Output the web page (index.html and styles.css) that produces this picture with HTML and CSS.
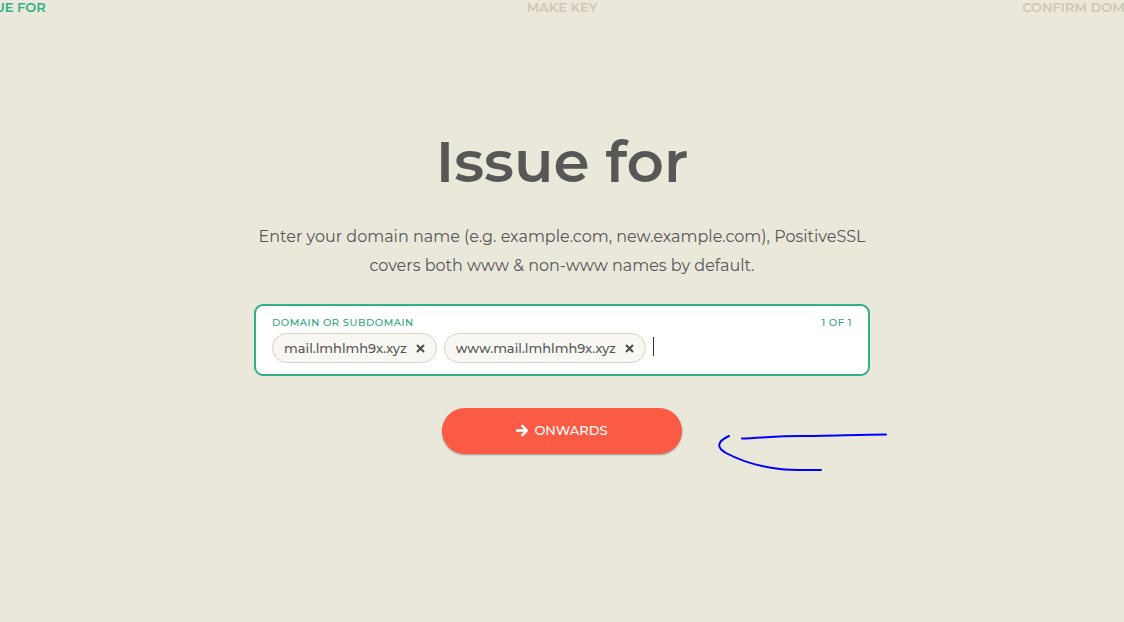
FILE: index.html
```html
<!DOCTYPE html>
<html lang="en">
<head>
<meta charset="utf-8">
<meta name="viewport" content="width=device-width, initial-scale=1">
<title>Issue for</title>
<link rel="stylesheet" href="styles.css">
</head>
<body>
<ol class="steps">
  <li class="step step-current" aria-current="step">Issue for</li>
  <li class="step">Make key</li>
  <li class="step">Confirm domain</li>
</ol>
<main class="panel">
  <h1 class="title">Issue for</h1>
  <p class="intro">Enter your domain name (e.g. example.com, new.example.com), PositiveSSL covers both www &amp; non-www names by default.</p>
  <form class="form">
    <div class="field">
      <div class="field-head">
        <label for="domain">Domain or subdomain</label>
        <span>1 of 1</span>
      </div>
      <div class="tags">
        <span class="tag">mail.lmhlmh9x.xyz
          <button class="remove" type="button" aria-label="Remove mail.lmhlmh9x.xyz"><svg width="9" height="9" viewBox="0 0 9 9"><path d="M1 1l7 7M8 1L1 8"/></svg></button>
        </span>
        <span class="tag">www.mail.lmhlmh9x.xyz
          <button class="remove" type="button" aria-label="Remove www.mail.lmhlmh9x.xyz"><svg width="9" height="9" viewBox="0 0 9 9"><path d="M1 1l7 7M8 1L1 8"/></svg></button>
        </span>
        <input class="entry" id="domain" type="text" autocomplete="off">
      </div>
    </div>
    <div class="actions">
      <button class="submit" type="button">
        <svg class="arrow" width="12" height="13" viewBox="0 0 12 13"><path d="M0 6.5H10.500M5.500 1.100L10.900 6.500L5.500 11.900"/></svg>
        Onwards
      </button>
      <svg class="scribble" width="172" height="42" viewBox="0 0 172 42" aria-hidden="true"><path d="M12 4C-1 10 0 16 9 21C24 29 45 35 63 37C74 38.500 89 38 104 38M25 6.500C47 5.500 65 4 83 4C110 4 144 2.500 169 2.500"/></svg>
    </div>
  </form>
</main>
</body>
</html>
```
FILE: styles.css
```css
* {
  box-sizing: border-box;
}

body {
  margin: 0;
  min-height: 100vh;
  overflow: hidden;
  background: #eae7db;
  color: #575756;
  font-family: Montserrat, Inter, "Open Sans", sans-serif;
  font-size: 13px;
}

.steps {
  display: grid;
  grid-template-columns: 1fr auto 1fr;
  margin: 0 -26px;
  padding: 0;
  list-style: none;
  color: #d0c8b0;
  font-weight: 600;
  line-height: 15px;
  text-transform: uppercase;
  white-space: nowrap;
}

.step:last-child {
  padding-right: 1px;
  text-align: right;
}

.step-current {
  color: #2fb086;
}

.panel {
  width: 100%;
  max-width: 616px;
  margin: 0 auto;
  padding-top: 112px;
}

.title {
  margin: 0;
  font-size: 58px;
  font-weight: 600;
  line-height: 70px;
  text-align: center;
}

.intro {
  margin: 25px 0 24px;
  font-size: 16px;
  font-weight: 400;
  line-height: 29px;
  text-align: center;
}

.field {
  padding: 10px 16px 11px;
  border: 2px solid #2fb086;
  border-radius: 9px;
  background: #fff;
}

.field-head {
  display: flex;
  justify-content: space-between;
  margin-bottom: 4px;
  color: #2fa37c;
  font-size: 10px;
  font-weight: 500;
  letter-spacing: 0.05em;
  line-height: 13px;
  text-transform: uppercase;
}

.tags {
  display: flex;
  flex-wrap: wrap;
  align-items: center;
  gap: 7px;
}

.tag {
  display: flex;
  align-items: center;
  gap: 9px;
  height: 30px;
  padding: 0 11px;
  border: 1px solid #d8d3c0;
  border-radius: 15px;
  background: #f9f7f4;
  font-weight: 500;
  white-space: nowrap;
}

.remove {
  display: flex;
  padding: 0;
  border: 0;
  background: none;
  cursor: pointer;
}

.remove path {
  fill: none;
  stroke: #4b4b4a;
  stroke-width: 2;
}

.entry {
  flex: 1;
  min-width: 20px;
  height: 19px;
  margin-bottom: 3px;
  padding: 0;
  border: 0;
  border-left: 1px solid #333;
  outline: 0;
  background: none;
  color: inherit;
  font: inherit;
}

.actions {
  position: relative;
  display: flex;
  justify-content: center;
  margin-top: 32px;
}

.submit {
  display: flex;
  align-items: center;
  justify-content: center;
  gap: 6px;
  width: 240px;
  height: 46px;
  padding: 0 0 2px;
  border: 0;
  border-radius: 23px;
  background: #fb5a44;
  box-shadow: 0 1px 2px rgba(0, 0, 0, 0.35);
  color: #fff;
  font: inherit;
  font-weight: 500;
  text-transform: uppercase;
  cursor: pointer;
}

.arrow {
  fill: none;
  stroke: #fff;
  stroke-width: 2.400;
}

.scribble {
  position: absolute;
  top: 24px;
  left: calc(50% + 155px);
  fill: none;
  stroke: #00f;
  stroke-width: 2;
  stroke-linecap: round;
}
```
